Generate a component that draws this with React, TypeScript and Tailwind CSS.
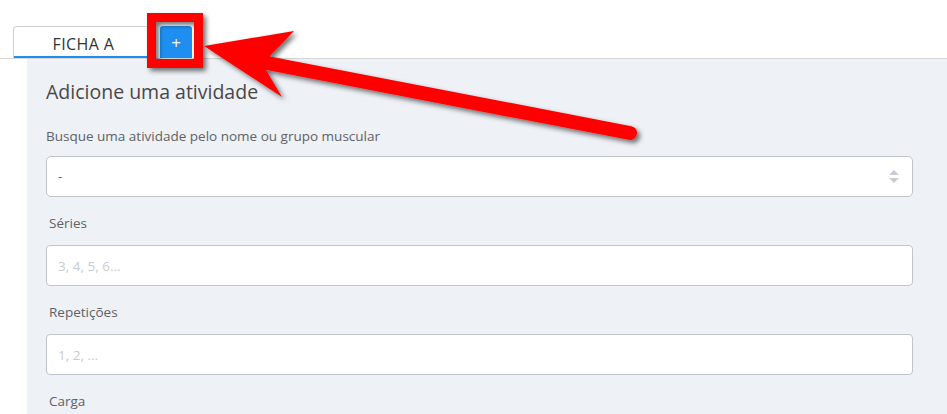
import type { ReactNode } from "react";

const font = { fontFamily: '"Open Sans", "Noto Sans", sans-serif' };

function Field({ label, children }: { label: string; children: ReactNode }) {
  return (
    <div>
      <p className="mt-[17px] h-[18px] pl-[3px] text-[13.5px] leading-[18px] text-[#606266]">{label}</p>
      <div className="mt-[13px]">{children}</div>
    </div>
  );
}

function TextInput({ placeholder }: { placeholder: string }) {
  return (
    <input
      readOnly
      placeholder={placeholder}
      className="block h-[41px] w-full rounded-[4px] border border-[#c0c4cc] bg-white px-[11px] text-[13.5px] text-[#606266] outline-none placeholder:text-[#c8cbd1]"
    />
  );
}

function Annotation() {
  return (
    <svg
      className="pointer-events-none absolute left-0 top-0"
      width={947}
      height={414}
      viewBox="0 0 947 414"
    >
      <defs>
        <filter id="shadow" x="-10%" y="-10%" width="130%" height="140%">
          <feDropShadow dx="3" dy="3" stdDeviation="2.5" floodColor="#000" floodOpacity="0.55" />
        </filter>
      </defs>
      <g filter="url(#shadow)">
        <rect x={151.5} y={17.5} width={47} height={46} fill="none" stroke="#ff0000" strokeWidth={9} />
        <line x1={262} y1={62} x2={630} y2={133} stroke="#ff0000" strokeWidth={14} strokeLinecap="round" />
        <polygon points="204,46 294,31 270,56 266,70 282,97" fill="#ff0000" />
      </g>
    </svg>
  );
}

export default function App() {
  return (
    <div className="relative h-[414px] w-[947px] overflow-hidden bg-white" style={font}>
      <div className="flex h-[59px] items-end border-b border-[#d6d6d6] pl-[13px]">
        <div className="flex h-[32px] w-[137px] items-center justify-center rounded-t-[4px] border border-b-0 border-[#cfcfcf] bg-white shadow-[inset_0_-2px_0_#1e8ff0]">
          <span className="pl-[4px] pt-[3px] text-[16px] tracking-[0.4px] text-[#333]">FICHA A</span>
        </div>
        <button className="ml-[10px] flex h-[32px] w-[32px] items-center justify-center rounded-t-[3px] bg-[#1e8ff0] text-[17px] leading-none text-white">
          +
        </button>
      </div>

      <div className="ml-[27px] h-[400px] bg-[#eef1f6] pl-[19px] pr-[34px] pt-[19px]">
        <h2 className="h-[28px] text-[19.5px] leading-[28px] text-[#484848]">Adicione uma atividade</h2>

        <p className="mt-[21px] h-[18px] text-[13.5px] leading-[18px] text-[#606266]">
          Busque uma atividade pelo nome ou grupo muscular
        </p>
        <div className="mt-[11px] flex h-[41px] items-center justify-between rounded-[5px] border border-[#c0c4cc] bg-white pl-[11px] pr-[12px]">
          <span className="text-[13.5px] text-[#606266]">-</span>
          <svg width="12" height="15" viewBox="0 0 12 15">
            <polygon points="1,6 6,1 11,6" fill="#c8cbd1" />
            <polygon points="1,9 11,9 6,14" fill="#c8cbd1" />
          </svg>
        </div>

        <Field label="Séries">
          <TextInput placeholder="3, 4, 5, 6..." />
        </Field>
        <Field label="Repetições">
          <TextInput placeholder="1, 2, ..." />
        </Field>
        <p className="mt-[17px] h-[18px] pl-[3px] text-[13.5px] leading-[18px] text-[#606266]">Carga</p>
      </div>

      <Annotation />
    </div>
  );
}
